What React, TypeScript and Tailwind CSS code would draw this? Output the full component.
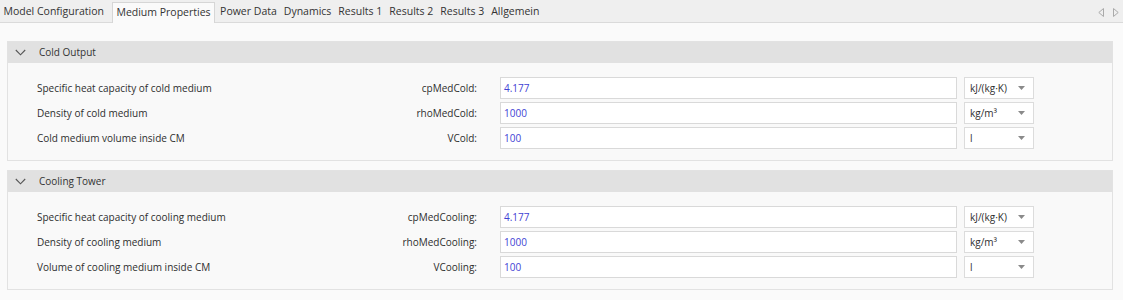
import React from "react";

const tabs = [
  "Model Configuration",
  "Medium Properties",
  "Power Data",
  "Dynamics",
  "Results 1",
  "Results 2",
  "Results 3",
  "Allgemein",
];

type Row = { label: string; name: string; value: string; unit: React.ReactNode };

const panels: { title: string; rows: Row[] }[] = [
  {
    title: "Cold Output",
    rows: [
      { label: "Specific heat capacity of cold medium", name: "cpMedCold:", value: "4.177", unit: "kJ/(kg·K)" },
      { label: "Density of cold medium", name: "rhoMedCold:", value: "1000", unit: <>kg/m³</> },
      { label: "Cold medium volume inside CM", name: "VCold:", value: "100", unit: "l" },
    ],
  },
  {
    title: "Cooling Tower",
    rows: [
      { label: "Specific heat capacity of cooling medium", name: "cpMedCooling:", value: "4.177", unit: "kJ/(kg·K)" },
      { label: "Density of cooling medium", name: "rhoMedCooling:", value: "1000", unit: <>kg/m³</> },
      { label: "Volume of cooling medium inside CM", name: "VCooling:", value: "100", unit: "l" },
    ],
  },
];

function Chevron() {
  return (
    <svg width="11" height="7" viewBox="0 0 11 7" fill="none">
      <path d="M0.8 1 L5.5 5.8 L10.2 1" stroke="#555" strokeWidth="1.1" />
    </svg>
  );
}

function Caret() {
  return (
    <svg width="7" height="4" viewBox="0 0 7 4">
      <path d="M0 0 H7 L3.5 4 Z" fill="#8a8a8a" />
    </svg>
  );
}

function Panel({ title, rows }: { title: string; rows: Row[] }) {
  return (
    <div className="border border-[#e2e2e2] bg-[#f9f9f9]">
      <div className="flex h-[21px] items-center bg-[#e1e1e1] pl-[7px]">
        <Chevron />
        <span className="ml-[13px] text-[10px] text-[#333]">{title}</span>
      </div>
      <div className="flex flex-col gap-[3px] pl-[29px] pt-[14px] pb-[11px]">
        {rows.map((r) => (
          <div key={r.name} className="flex h-[22px] items-center">
            <div className="flex w-[440px] items-center justify-between text-[10px] text-[#2e2e2e]">
              <span>{r.label}</span>
              <span>{r.name}</span>
            </div>
            <div className="ml-[23px] flex h-[22px] w-[457px] items-center border border-[#d9d9d9] bg-white pl-[3px] text-[10px] text-[#3f3fd4]">
              {r.value}
            </div>
            <div className="ml-[7px] flex h-[22px] w-[70px] items-center justify-between border border-[#dcdcdc] bg-white pl-[5px] pr-[8px] text-[10px] text-[#2e2e2e]">
              <span>{r.unit}</span>
              <Caret />
            </div>
          </div>
        ))}
      </div>
    </div>
  );
}

export default function App() {
  return (
    <div
      className="h-[300px] w-[1123px] overflow-hidden bg-[#fafafa]"
      style={{ fontFamily: '"Open Sans", "Noto Sans", sans-serif' }}
    >
      <div className="relative flex h-[23px] items-end border-b border-[#dadada] bg-[#efefef]">
        {tabs.map((t, i) =>
          i === 1 ? (
            <div
              key={t}
              className="-mb-px ml-[5px] mr-[2px] flex h-[21px] items-center border border-b-0 border-[#d6d6d6] bg-[#fafafa] px-[3px] text-[10.5px] text-[#333]"
            >
              {t}
            </div>
          ) : (
            <div key={t} className="flex h-[20px] items-center px-[3.5px] text-[10.5px] text-[#333]">
              {t}
            </div>
          )
        )}
        <div className="ml-auto mr-[4px] flex h-[20px] items-center gap-[9px]">
          <svg width="6" height="9" viewBox="0 0 6 9">
            <path d="M5.5 0.5 L0.8 4.5 L5.5 8.5 Z" fill="none" stroke="#aaa" strokeWidth="1" />
          </svg>
          <svg width="6" height="9" viewBox="0 0 6 9">
            <path d="M0.5 0.5 L5.2 4.5 L0.5 8.5 Z" fill="none" stroke="#aaa" strokeWidth="1" />
          </svg>
        </div>
      </div>
      <div className="flex flex-col gap-[9px] pl-[7px] pr-[10px] pt-[18px]">
        {panels.map((p) => (
          <Panel key={p.title} title={p.title} rows={p.rows} />
        ))}
      </div>
    </div>
  );
}
